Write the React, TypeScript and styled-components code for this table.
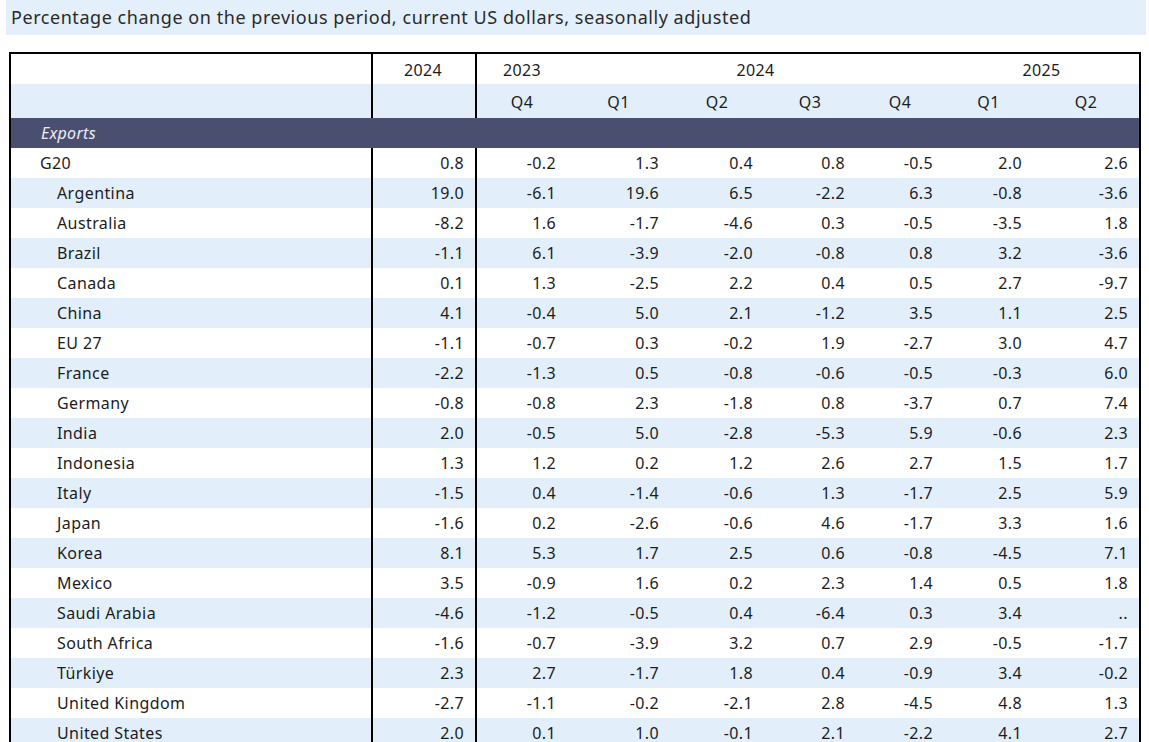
import React from 'react'
import styled, { createGlobalStyle } from 'styled-components'

const GlobalStyle = createGlobalStyle`
  * {
    box-sizing: border-box;
  }
  body {
    margin: 0;
    background: #ffffff;
    font-family: 'Noto Sans', 'Noto Sans CJK JP', sans-serif;
    color: #1c1c1c;
  }
`

const COLUMNS = '362px 104px 90px 103px 94px 92px 88px 89px 106px'

const Page = styled.div`
  width: 1149px;
  height: 742px;
  overflow: hidden;
`
const Caption = styled.div`
  margin: 0 3px 0 6px;
  height: 35px;
  padding-left: 5px;
  padding-bottom: 2px;
  display: flex;
  align-items: center;
  background: #e3f0fb;
  font-size: 18px;
  letter-spacing: 0.55px;
  color: #2a2a2a;
`
const Table = styled.div`
  margin: 17px 0 0 9px;
  width: 1132px;
  border: 2px solid #000;
  border-bottom: none;
`
const Row = styled.div<{ $shaded?: boolean; $height?: number }>`
  display: grid;
  grid-template-columns: ${COLUMNS};
  height: ${({ $height }) => $height ?? 30}px;
  background: ${({ $shaded }) => ($shaded ? '#e2effa' : '#ffffff')};
  font-size: 16px;
  letter-spacing: 0.4px;
`
const LabelCell = styled.div<{ $indent?: boolean }>`
  display: flex;
  align-items: center;
  padding-left: ${({ $indent }) => ($indent ? 46 : 29)}px;
  border-right: 2px solid #000;
  white-space: nowrap;
`
const NumCell = styled.div<{ $ruled?: boolean }>`
  display: flex;
  align-items: center;
  justify-content: flex-end;
  padding-right: 11px;
  border-right: ${({ $ruled }) => ($ruled ? '2px solid #000' : 'none')};
`
const HeadCell = styled.div<{ $ruled?: boolean; $span?: number }>`
  display: flex;
  align-items: center;
  justify-content: center;
  grid-column: span ${({ $span }) => $span ?? 1};
  padding-right: ${({ $ruled }) => ($ruled ? 2 : 0)}px;
  padding-top: 1px;
  border-right: ${({ $ruled }) => ($ruled ? '2px solid #000' : 'none')};
`
const SectionBar = styled.div`
  height: 30px;
  display: flex;
  align-items: center;
  padding-left: 30px;
  background: #4b4f6f;
  color: #ececf2;
  font-size: 16px;
  font-style: italic;
  letter-spacing: 0.3px;
`

type Entry = { name: string; values: string[]; total?: boolean }

const rows: Entry[] = [
  { name: 'G20', total: true, values: ['0.8', '-0.2', '1.3', '0.4', '0.8', '-0.5', '2.0', '2.6'] },
  { name: 'Argentina', values: ['19.0', '-6.1', '19.6', '6.5', '-2.2', '6.3', '-0.8', '-3.6'] },
  { name: 'Australia', values: ['-8.2', '1.6', '-1.7', '-4.6', '0.3', '-0.5', '-3.5', '1.8'] },
  { name: 'Brazil', values: ['-1.1', '6.1', '-3.9', '-2.0', '-0.8', '0.8', '3.2', '-3.6'] },
  { name: 'Canada', values: ['0.1', '1.3', '-2.5', '2.2', '0.4', '0.5', '2.7', '-9.7'] },
  { name: 'China', values: ['4.1', '-0.4', '5.0', '2.1', '-1.2', '3.5', '1.1', '2.5'] },
  { name: 'EU 27', values: ['-1.1', '-0.7', '0.3', '-0.2', '1.9', '-2.7', '3.0', '4.7'] },
  { name: 'France', values: ['-2.2', '-1.3', '0.5', '-0.8', '-0.6', '-0.5', '-0.3', '6.0'] },
  { name: 'Germany', values: ['-0.8', '-0.8', '2.3', '-1.8', '0.8', '-3.7', '0.7', '7.4'] },
  { name: 'India', values: ['2.0', '-0.5', '5.0', '-2.8', '-5.3', '5.9', '-0.6', '2.3'] },
  { name: 'Indonesia', values: ['1.3', '1.2', '0.2', '1.2', '2.6', '2.7', '1.5', '1.7'] },
  { name: 'Italy', values: ['-1.5', '0.4', '-1.4', '-0.6', '1.3', '-1.7', '2.5', '5.9'] },
  { name: 'Japan', values: ['-1.6', '0.2', '-2.6', '-0.6', '4.6', '-1.7', '3.3', '1.6'] },
  { name: 'Korea', values: ['8.1', '5.3', '1.7', '2.5', '0.6', '-0.8', '-4.5', '7.1'] },
  { name: 'Mexico', values: ['3.5', '-0.9', '1.6', '0.2', '2.3', '1.4', '0.5', '1.8'] },
  { name: 'Saudi Arabia', values: ['-4.6', '-1.2', '-0.5', '0.4', '-6.4', '0.3', '3.4', '..'] },
  { name: 'South Africa', values: ['-1.6', '-0.7', '-3.9', '3.2', '0.7', '2.9', '-0.5', '-1.7'] },
  { name: 'Türkiye', values: ['2.3', '2.7', '-1.7', '1.8', '0.4', '-0.9', '3.4', '-0.2'] },
  { name: 'United Kingdom', values: ['-2.7', '-1.1', '-0.2', '-2.1', '2.8', '-4.5', '4.8', '1.3'] },
  { name: 'United States', values: ['2.0', '0.1', '1.0', '-0.1', '2.1', '-2.2', '4.1', '2.7'] },
]

const quarters = ['Q4', 'Q1', 'Q2', 'Q3', 'Q4', 'Q1', 'Q2']

const App = (): JSX.Element => (
  <Page>
    <GlobalStyle />
    <Caption>Percentage change on the previous period, current US dollars, seasonally adjusted</Caption>
    <Table>
      <Row>
        <HeadCell $ruled />
        <HeadCell $ruled>2024</HeadCell>
        <HeadCell>2023</HeadCell>
        <HeadCell $span={4}>2024</HeadCell>
        <HeadCell $span={2}>2025</HeadCell>
      </Row>
      <Row $shaded $height={34}>
        <HeadCell $ruled />
        <HeadCell $ruled />
        {quarters.map((q, i) => (
          <HeadCell key={i}>{q}</HeadCell>
        ))}
      </Row>
      <SectionBar>Exports</SectionBar>
      {rows.map((row, i) => (
        <Row key={row.name} $shaded={i % 2 === 1}>
          <LabelCell $indent={!row.total}>{row.name}</LabelCell>
          {row.values.map((v, j) => (
            <NumCell key={j} $ruled={j === 0}>
              {v}
            </NumCell>
          ))}
        </Row>
      ))}
    </Table>
  </Page>
)

export default App
